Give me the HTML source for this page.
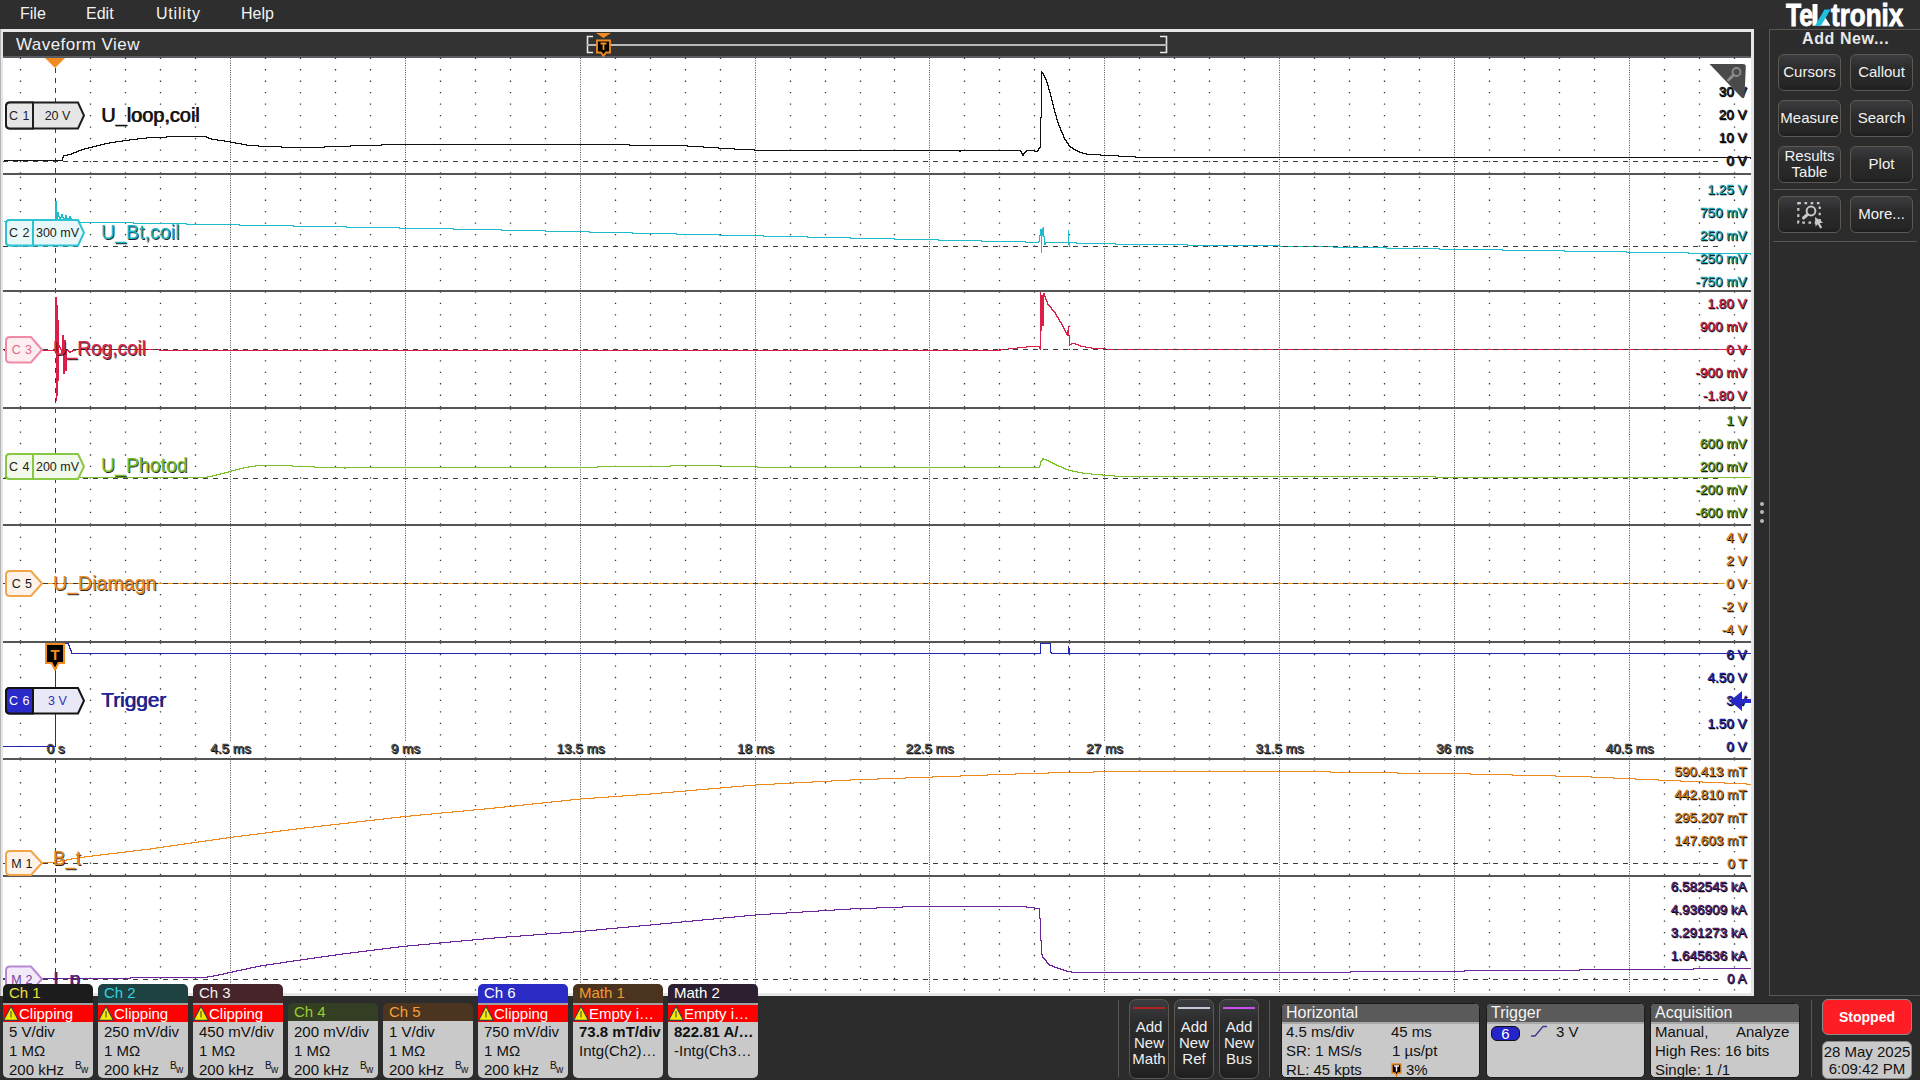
<!DOCTYPE html>
<html><head><meta charset="utf-8"><title>Waveform View</title>
<style>
*{box-sizing:border-box;margin:0;padding:0}
html,body{width:1920px;height:1080px;overflow:hidden;background:#2c2c2c;font-family:"Liberation Sans", sans-serif;}
.a{position:absolute;white-space:pre}
.menu{position:absolute;left:0;top:0;width:1920px;height:29px;background:#2e2e2e}
.menu span{position:absolute;top:4px;color:#f4f4f4;font-size:16px;line-height:20px}
.btn{position:absolute;width:63px;height:37px;border:1px solid #5e5852;border-radius:6px;
 background:linear-gradient(#3c3d40 0%,#2b2b2c 40%,#262626 85%,#1e1e1e 100%);color:#f2f2f2;font-size:15px;
 display:flex;align-items:center;justify-content:center;text-align:center;line-height:16px;padding-bottom:2px}
.badge{position:absolute;width:90px}
.bh{position:absolute;left:0;width:90px;height:19px;border-radius:5px 5px 0 0;font-size:15px;line-height:17px;padding-left:6px}
.bl{position:absolute;left:0;width:90px;height:2px;background:#a0a0a0}
.br{position:absolute;left:0;width:90px;height:17px;background:#ff0000;color:#fff;font-size:15px;line-height:17px;padding-left:16px}
.bb{position:absolute;left:0;width:90px;background:#c9c9c9;border-radius:0 0 5px 5px;color:#111;font-size:15px}
.bb div{position:absolute;left:6px;line-height:19px}
.bw{position:absolute;left:74px;font-size:10px;line-height:10px;color:#111}
.pan{position:absolute;border:1px solid #1a1a1a;border-radius:5px;background:#c9c9c9;overflow:hidden}
.pan .ph{position:absolute;left:0;top:0;right:0;height:18px;background:#5a5a5a;color:#f4f4f4;font-size:16px;line-height:17px;padding-left:4px}
.pan .pl{position:absolute;left:0;right:0;top:18px;height:2px;background:#a8a8a8}
.pan .t{position:absolute;font-size:15px;line-height:19px;color:#111}
</style></head><body>

<div class="menu"><span style="left:20px">File</span><span style="left:86px">Edit</span><span style="left:156px;letter-spacing:0.8px">Utility</span><span style="left:241px">Help</span></div>
<div class="a" style="left:0;top:29px;width:1754px;height:967px;background:#e4e6e8"></div>
<div class="a" style="left:0;top:29px;width:1px;height:967px;background:#b4b4b4"></div>
<div class="a" style="left:3px;top:32px;width:1748px;height:24px;background:#333333"></div>
<div class="a" style="left:3px;top:56px;width:1748px;height:2px;background:#5a5e63"></div>
<div class="a" style="left:3px;top:58px;width:1748px;height:935px;background:#ffffff"></div>
<div class="a" style="left:16px;top:35px;color:#f0f0f0;font-size:17px;line-height:20px;letter-spacing:0.45px">Waveform View</div>
<svg class="a" style="left:0;top:0" width="1760" height="1000" viewBox="0 0 1760 1000"><path d="M593 36.5H587.5V52.5H593" fill="none" stroke="#e8e8e8" stroke-width="1.6"/><path d="M1160 36.5H1166.5V52.5H1160" fill="none" stroke="#e8e8e8" stroke-width="1.6"/><rect x="587" y="44" width="580" height="2" fill="#b8b8b8"/><path d="M596 33H611L603.5 38Z" fill="#f28c22"/><path d="M597 40.5H610V52.5H606L603.5 56L601 52.5H597Z" fill="#000" stroke="#f28c22" stroke-width="1.8"/><path d="M600.5 43.5H606.5M603.5 43.5V50" stroke="#f28c22" stroke-width="1.8"/><path d="M20.5 57.65V173.65M90.5 57.65V173.65M125.5 57.65V173.65M160.5 57.65V173.65M195.5 57.65V173.65M265.5 57.65V173.65M300.5 57.65V173.65M335.5 57.65V173.65M370.5 57.65V173.65M440.5 57.65V173.65M475.5 57.65V173.65M510.5 57.65V173.65M545.5 57.65V173.65M615.5 57.65V173.65M650.5 57.65V173.65M685.5 57.65V173.65M720.5 57.65V173.65M790.5 57.65V173.65M825.5 57.65V173.65M860.5 57.65V173.65M894.5 57.65V173.65M964.5 57.65V173.65M999.5 57.65V173.65M1034.5 57.65V173.65M1069.5 57.65V173.65M1139.5 57.65V173.65M1174.5 57.65V173.65M1209.5 57.65V173.65M1244.5 57.65V173.65M1314.5 57.65V173.65M1349.5 57.65V173.65M1384.5 57.65V173.65M1419.5 57.65V173.65M1489.5 57.65V173.65M1524.5 57.65V173.65M1559.5 57.65V173.65M1594.5 57.65V173.65M1664.5 57.65V173.65M1699.5 57.65V173.65M1734.5 57.65V173.65M20.5 176.65V292.65M90.5 176.65V292.65M125.5 176.65V292.65M160.5 176.65V292.65M195.5 176.65V292.65M265.5 176.65V292.65M300.5 176.65V292.65M335.5 176.65V292.65M370.5 176.65V292.65M440.5 176.65V292.65M475.5 176.65V292.65M510.5 176.65V292.65M545.5 176.65V292.65M615.5 176.65V292.65M650.5 176.65V292.65M685.5 176.65V292.65M720.5 176.65V292.65M790.5 176.65V292.65M825.5 176.65V292.65M860.5 176.65V292.65M894.5 176.65V292.65M964.5 176.65V292.65M999.5 176.65V292.65M1034.5 176.65V292.65M1069.5 176.65V292.65M1139.5 176.65V292.65M1174.5 176.65V292.65M1209.5 176.65V292.65M1244.5 176.65V292.65M1314.5 176.65V292.65M1349.5 176.65V292.65M1384.5 176.65V292.65M1419.5 176.65V292.65M1489.5 176.65V292.65M1524.5 176.65V292.65M1559.5 176.65V292.65M1594.5 176.65V292.65M1664.5 176.65V292.65M1699.5 176.65V292.65M1734.5 176.65V292.65M20.5 291.35V407.35M90.5 291.35V407.35M125.5 291.35V407.35M160.5 291.35V407.35M195.5 291.35V407.35M265.5 291.35V407.35M300.5 291.35V407.35M335.5 291.35V407.35M370.5 291.35V407.35M440.5 291.35V407.35M475.5 291.35V407.35M510.5 291.35V407.35M545.5 291.35V407.35M615.5 291.35V407.35M650.5 291.35V407.35M685.5 291.35V407.35M720.5 291.35V407.35M790.5 291.35V407.35M825.5 291.35V407.35M860.5 291.35V407.35M894.5 291.35V407.35M964.5 291.35V407.35M999.5 291.35V407.35M1034.5 291.35V407.35M1069.5 291.35V407.35M1139.5 291.35V407.35M1174.5 291.35V407.35M1209.5 291.35V407.35M1244.5 291.35V407.35M1314.5 291.35V407.35M1349.5 291.35V407.35M1384.5 291.35V407.35M1419.5 291.35V407.35M1489.5 291.35V407.35M1524.5 291.35V407.35M1559.5 291.35V407.35M1594.5 291.35V407.35M1664.5 291.35V407.35M1699.5 291.35V407.35M1734.5 291.35V407.35M20.5 408.45V524.45M90.5 408.45V524.45M125.5 408.45V524.45M160.5 408.45V524.45M195.5 408.45V524.45M265.5 408.45V524.45M300.5 408.45V524.45M335.5 408.45V524.45M370.5 408.45V524.45M440.5 408.45V524.45M475.5 408.45V524.45M510.5 408.45V524.45M545.5 408.45V524.45M615.5 408.45V524.45M650.5 408.45V524.45M685.5 408.45V524.45M720.5 408.45V524.45M790.5 408.45V524.45M825.5 408.45V524.45M860.5 408.45V524.45M894.5 408.45V524.45M964.5 408.45V524.45M999.5 408.45V524.45M1034.5 408.45V524.45M1069.5 408.45V524.45M1139.5 408.45V524.45M1174.5 408.45V524.45M1209.5 408.45V524.45M1244.5 408.45V524.45M1314.5 408.45V524.45M1349.5 408.45V524.45M1384.5 408.45V524.45M1419.5 408.45V524.45M1489.5 408.45V524.45M1524.5 408.45V524.45M1559.5 408.45V524.45M1594.5 408.45V524.45M1664.5 408.45V524.45M1699.5 408.45V524.45M1734.5 408.45V524.45M20.5 525.25V641.25M90.5 525.25V641.25M125.5 525.25V641.25M160.5 525.25V641.25M195.5 525.25V641.25M265.5 525.25V641.25M300.5 525.25V641.25M335.5 525.25V641.25M370.5 525.25V641.25M440.5 525.25V641.25M475.5 525.25V641.25M510.5 525.25V641.25M545.5 525.25V641.25M615.5 525.25V641.25M650.5 525.25V641.25M685.5 525.25V641.25M720.5 525.25V641.25M790.5 525.25V641.25M825.5 525.25V641.25M860.5 525.25V641.25M894.5 525.25V641.25M964.5 525.25V641.25M999.5 525.25V641.25M1034.5 525.25V641.25M1069.5 525.25V641.25M1139.5 525.25V641.25M1174.5 525.25V641.25M1209.5 525.25V641.25M1244.5 525.25V641.25M1314.5 525.25V641.25M1349.5 525.25V641.25M1384.5 525.25V641.25M1419.5 525.25V641.25M1489.5 525.25V641.25M1524.5 525.25V641.25M1559.5 525.25V641.25M1594.5 525.25V641.25M1664.5 525.25V641.25M1699.5 525.25V641.25M1734.5 525.25V641.25M20.5 642.45V758.45M90.5 642.45V758.45M125.5 642.45V758.45M160.5 642.45V758.45M195.5 642.45V758.45M265.5 642.45V758.45M300.5 642.45V758.45M335.5 642.45V758.45M370.5 642.45V758.45M440.5 642.45V758.45M475.5 642.45V758.45M510.5 642.45V758.45M545.5 642.45V758.45M615.5 642.45V758.45M650.5 642.45V758.45M685.5 642.45V758.45M720.5 642.45V758.45M790.5 642.45V758.45M825.5 642.45V758.45M860.5 642.45V758.45M894.5 642.45V758.45M964.5 642.45V758.45M999.5 642.45V758.45M1034.5 642.45V758.45M1069.5 642.45V758.45M1139.5 642.45V758.45M1174.5 642.45V758.45M1209.5 642.45V758.45M1244.5 642.45V758.45M1314.5 642.45V758.45M1349.5 642.45V758.45M1384.5 642.45V758.45M1419.5 642.45V758.45M1489.5 642.45V758.45M1524.5 642.45V758.45M1559.5 642.45V758.45M1594.5 642.45V758.45M1664.5 642.45V758.45M1699.5 642.45V758.45M1734.5 642.45V758.45M20.5 759.15V875.15M90.5 759.15V875.15M125.5 759.15V875.15M160.5 759.15V875.15M195.5 759.15V875.15M265.5 759.15V875.15M300.5 759.15V875.15M335.5 759.15V875.15M370.5 759.15V875.15M440.5 759.15V875.15M475.5 759.15V875.15M510.5 759.15V875.15M545.5 759.15V875.15M615.5 759.15V875.15M650.5 759.15V875.15M685.5 759.15V875.15M720.5 759.15V875.15M790.5 759.15V875.15M825.5 759.15V875.15M860.5 759.15V875.15M894.5 759.15V875.15M964.5 759.15V875.15M999.5 759.15V875.15M1034.5 759.15V875.15M1069.5 759.15V875.15M1139.5 759.15V875.15M1174.5 759.15V875.15M1209.5 759.15V875.15M1244.5 759.15V875.15M1314.5 759.15V875.15M1349.5 759.15V875.15M1384.5 759.15V875.15M1419.5 759.15V875.15M1489.5 759.15V875.15M1524.5 759.15V875.15M1559.5 759.15V875.15M1594.5 759.15V875.15M1664.5 759.15V875.15M1699.5 759.15V875.15M1734.5 759.15V875.15M20.5 874.55V990.55M90.5 874.55V990.55M125.5 874.55V990.55M160.5 874.55V990.55M195.5 874.55V990.55M265.5 874.55V990.55M300.5 874.55V990.55M335.5 874.55V990.55M370.5 874.55V990.55M440.5 874.55V990.55M475.5 874.55V990.55M510.5 874.55V990.55M545.5 874.55V990.55M615.5 874.55V990.55M650.5 874.55V990.55M685.5 874.55V990.55M720.5 874.55V990.55M790.5 874.55V990.55M825.5 874.55V990.55M860.5 874.55V990.55M894.5 874.55V990.55M964.5 874.55V990.55M999.5 874.55V990.55M1034.5 874.55V990.55M1069.5 874.55V990.55M1139.5 874.55V990.55M1174.5 874.55V990.55M1209.5 874.55V990.55M1244.5 874.55V990.55M1314.5 874.55V990.55M1349.5 874.55V990.55M1384.5 874.55V990.55M1419.5 874.55V990.55M1489.5 874.55V990.55M1524.5 874.55V990.55M1559.5 874.55V990.55M1594.5 874.55V990.55M1664.5 874.55V990.55M1699.5 874.55V990.55M1734.5 874.55V990.55" stroke="#383838" stroke-width="1.3" stroke-dasharray="1.3 10.17" fill="none"/><path d="M230.5 58V993M405.5 58V993M580.5 58V993M755.5 58V993M929.5 58V993M1104.5 58V993M1279.5 58V993M1454.5 58V993M1629.5 58V993" stroke="#4a4a4a" stroke-width="1" stroke-dasharray="1 1.35" fill="none"/><path d="M55.5 68V993" stroke="#3c3c3c" stroke-width="1" stroke-dasharray="5 5" fill="none"/><path d="M3 174H1751M3 291H1751M3 408H1751M3 525H1751M3 642H1751M3 759H1751M3 876H1751" stroke="#555" stroke-width="2" fill="none" shape-rendering="crispEdges"/><path d="M3 583.5H1751" fill="none" stroke="#f0921e" stroke-width="1.6" shape-rendering="crispEdges" /><rect x="1717.2" y="84.9" width="30.8" height="14" fill="#fff"/><text x="1747.4" y="96.80000000000001" text-anchor="end" font-family="Liberation Sans" font-size="13.5" fill="#000" stroke="#000" stroke-width="0.3">30 V</text><text x="1746.5" y="95.9" text-anchor="end" font-family="Liberation Sans" font-size="13.5" fill="#111111" stroke="#111111" stroke-width="0.3">30 V</text><rect x="1717.2" y="108.4" width="30.8" height="14" fill="#fff"/><text x="1747.4" y="120.30000000000001" text-anchor="end" font-family="Liberation Sans" font-size="13.5" fill="#000" stroke="#000" stroke-width="0.3">20 V</text><text x="1746.5" y="119.4" text-anchor="end" font-family="Liberation Sans" font-size="13.5" fill="#111111" stroke="#111111" stroke-width="0.3">20 V</text><rect x="1717.2" y="131.4" width="30.8" height="14" fill="#fff"/><text x="1747.4" y="143.3" text-anchor="end" font-family="Liberation Sans" font-size="13.5" fill="#000" stroke="#000" stroke-width="0.3">10 V</text><text x="1746.5" y="142.4" text-anchor="end" font-family="Liberation Sans" font-size="13.5" fill="#111111" stroke="#111111" stroke-width="0.3">10 V</text><rect x="1724.7" y="154.4" width="23.3" height="14" fill="#fff"/><text x="1747.4" y="166.3" text-anchor="end" font-family="Liberation Sans" font-size="13.5" fill="#000" stroke="#000" stroke-width="0.3">0 V</text><text x="1746.5" y="165.4" text-anchor="end" font-family="Liberation Sans" font-size="13.5" fill="#111111" stroke="#111111" stroke-width="0.3">0 V</text><rect x="1706.0" y="182.9" width="42.0" height="14" fill="#fff"/><text x="1747.4" y="194.8" text-anchor="end" font-family="Liberation Sans" font-size="13.5" fill="#000" stroke="#000" stroke-width="0.3">1.25 V</text><text x="1746.5" y="193.9" text-anchor="end" font-family="Liberation Sans" font-size="13.5" fill="#14a4b4" stroke="#14a4b4" stroke-width="0.3">1.25 V</text><rect x="1698.5" y="205.9" width="49.5" height="14" fill="#fff"/><text x="1747.4" y="217.8" text-anchor="end" font-family="Liberation Sans" font-size="13.5" fill="#000" stroke="#000" stroke-width="0.3">750 mV</text><text x="1746.5" y="216.9" text-anchor="end" font-family="Liberation Sans" font-size="13.5" fill="#14a4b4" stroke="#14a4b4" stroke-width="0.3">750 mV</text><rect x="1698.5" y="228.9" width="49.5" height="14" fill="#fff"/><text x="1747.4" y="240.8" text-anchor="end" font-family="Liberation Sans" font-size="13.5" fill="#000" stroke="#000" stroke-width="0.3">250 mV</text><text x="1746.5" y="239.9" text-anchor="end" font-family="Liberation Sans" font-size="13.5" fill="#14a4b4" stroke="#14a4b4" stroke-width="0.3">250 mV</text><rect x="1694.0" y="251.9" width="54.0" height="14" fill="#fff"/><text x="1747.4" y="263.79999999999995" text-anchor="end" font-family="Liberation Sans" font-size="13.5" fill="#000" stroke="#000" stroke-width="0.3">-250 mV</text><text x="1746.5" y="262.9" text-anchor="end" font-family="Liberation Sans" font-size="13.5" fill="#14a4b4" stroke="#14a4b4" stroke-width="0.3">-250 mV</text><rect x="1694.0" y="274.9" width="54.0" height="14" fill="#fff"/><text x="1747.4" y="286.79999999999995" text-anchor="end" font-family="Liberation Sans" font-size="13.5" fill="#000" stroke="#000" stroke-width="0.3">-750 mV</text><text x="1746.5" y="285.9" text-anchor="end" font-family="Liberation Sans" font-size="13.5" fill="#14a4b4" stroke="#14a4b4" stroke-width="0.3">-750 mV</text><rect x="1706.0" y="296.9" width="42.0" height="14" fill="#fff"/><text x="1747.4" y="308.79999999999995" text-anchor="end" font-family="Liberation Sans" font-size="13.5" fill="#000" stroke="#000" stroke-width="0.3">1.80 V</text><text x="1746.5" y="307.9" text-anchor="end" font-family="Liberation Sans" font-size="13.5" fill="#c01e46" stroke="#c01e46" stroke-width="0.3">1.80 V</text><rect x="1698.5" y="319.9" width="49.5" height="14" fill="#fff"/><text x="1747.4" y="331.79999999999995" text-anchor="end" font-family="Liberation Sans" font-size="13.5" fill="#000" stroke="#000" stroke-width="0.3">900 mV</text><text x="1746.5" y="330.9" text-anchor="end" font-family="Liberation Sans" font-size="13.5" fill="#c01e46" stroke="#c01e46" stroke-width="0.3">900 mV</text><rect x="1724.7" y="342.9" width="23.3" height="14" fill="#fff"/><text x="1747.4" y="354.79999999999995" text-anchor="end" font-family="Liberation Sans" font-size="13.5" fill="#000" stroke="#000" stroke-width="0.3">0 V</text><text x="1746.5" y="353.9" text-anchor="end" font-family="Liberation Sans" font-size="13.5" fill="#c01e46" stroke="#c01e46" stroke-width="0.3">0 V</text><rect x="1694.0" y="365.9" width="54.0" height="14" fill="#fff"/><text x="1747.4" y="377.79999999999995" text-anchor="end" font-family="Liberation Sans" font-size="13.5" fill="#000" stroke="#000" stroke-width="0.3">-900 mV</text><text x="1746.5" y="376.9" text-anchor="end" font-family="Liberation Sans" font-size="13.5" fill="#c01e46" stroke="#c01e46" stroke-width="0.3">-900 mV</text><rect x="1701.5" y="388.9" width="46.5" height="14" fill="#fff"/><text x="1747.4" y="400.79999999999995" text-anchor="end" font-family="Liberation Sans" font-size="13.5" fill="#000" stroke="#000" stroke-width="0.3">-1.80 V</text><text x="1746.5" y="399.9" text-anchor="end" font-family="Liberation Sans" font-size="13.5" fill="#c01e46" stroke="#c01e46" stroke-width="0.3">-1.80 V</text><rect x="1724.7" y="413.9" width="23.3" height="14" fill="#fff"/><text x="1747.4" y="425.79999999999995" text-anchor="end" font-family="Liberation Sans" font-size="13.5" fill="#000" stroke="#000" stroke-width="0.3">1 V</text><text x="1746.5" y="424.9" text-anchor="end" font-family="Liberation Sans" font-size="13.5" fill="#5e9420" stroke="#5e9420" stroke-width="0.3">1 V</text><rect x="1698.5" y="436.9" width="49.5" height="14" fill="#fff"/><text x="1747.4" y="448.79999999999995" text-anchor="end" font-family="Liberation Sans" font-size="13.5" fill="#000" stroke="#000" stroke-width="0.3">600 mV</text><text x="1746.5" y="447.9" text-anchor="end" font-family="Liberation Sans" font-size="13.5" fill="#5e9420" stroke="#5e9420" stroke-width="0.3">600 mV</text><rect x="1698.5" y="459.9" width="49.5" height="14" fill="#fff"/><text x="1747.4" y="471.79999999999995" text-anchor="end" font-family="Liberation Sans" font-size="13.5" fill="#000" stroke="#000" stroke-width="0.3">200 mV</text><text x="1746.5" y="470.9" text-anchor="end" font-family="Liberation Sans" font-size="13.5" fill="#5e9420" stroke="#5e9420" stroke-width="0.3">200 mV</text><rect x="1694.0" y="482.9" width="54.0" height="14" fill="#fff"/><text x="1747.4" y="494.79999999999995" text-anchor="end" font-family="Liberation Sans" font-size="13.5" fill="#000" stroke="#000" stroke-width="0.3">-200 mV</text><text x="1746.5" y="493.9" text-anchor="end" font-family="Liberation Sans" font-size="13.5" fill="#5e9420" stroke="#5e9420" stroke-width="0.3">-200 mV</text><rect x="1694.0" y="505.9" width="54.0" height="14" fill="#fff"/><text x="1747.4" y="517.8" text-anchor="end" font-family="Liberation Sans" font-size="13.5" fill="#000" stroke="#000" stroke-width="0.3">-600 mV</text><text x="1746.5" y="516.9" text-anchor="end" font-family="Liberation Sans" font-size="13.5" fill="#5e9420" stroke="#5e9420" stroke-width="0.3">-600 mV</text><rect x="1724.7" y="530.9" width="23.3" height="14" fill="#fff"/><text x="1747.4" y="542.8" text-anchor="end" font-family="Liberation Sans" font-size="13.5" fill="#000" stroke="#000" stroke-width="0.3">4 V</text><text x="1746.5" y="541.9" text-anchor="end" font-family="Liberation Sans" font-size="13.5" fill="#d87e1e" stroke="#d87e1e" stroke-width="0.3">4 V</text><rect x="1724.7" y="553.9" width="23.3" height="14" fill="#fff"/><text x="1747.4" y="565.8" text-anchor="end" font-family="Liberation Sans" font-size="13.5" fill="#000" stroke="#000" stroke-width="0.3">2 V</text><text x="1746.5" y="564.9" text-anchor="end" font-family="Liberation Sans" font-size="13.5" fill="#d87e1e" stroke="#d87e1e" stroke-width="0.3">2 V</text><rect x="1724.7" y="576.9" width="23.3" height="14" fill="#fff"/><text x="1747.4" y="588.8" text-anchor="end" font-family="Liberation Sans" font-size="13.5" fill="#000" stroke="#000" stroke-width="0.3">0 V</text><text x="1746.5" y="587.9" text-anchor="end" font-family="Liberation Sans" font-size="13.5" fill="#d87e1e" stroke="#d87e1e" stroke-width="0.3">0 V</text><rect x="1720.2" y="599.9" width="27.8" height="14" fill="#fff"/><text x="1747.4" y="611.8" text-anchor="end" font-family="Liberation Sans" font-size="13.5" fill="#000" stroke="#000" stroke-width="0.3">-2 V</text><text x="1746.5" y="610.9" text-anchor="end" font-family="Liberation Sans" font-size="13.5" fill="#d87e1e" stroke="#d87e1e" stroke-width="0.3">-2 V</text><rect x="1720.2" y="622.9" width="27.8" height="14" fill="#fff"/><text x="1747.4" y="634.8" text-anchor="end" font-family="Liberation Sans" font-size="13.5" fill="#000" stroke="#000" stroke-width="0.3">-4 V</text><text x="1746.5" y="633.9" text-anchor="end" font-family="Liberation Sans" font-size="13.5" fill="#d87e1e" stroke="#d87e1e" stroke-width="0.3">-4 V</text><rect x="1724.7" y="647.9" width="23.3" height="14" fill="#fff"/><text x="1747.4" y="659.8" text-anchor="end" font-family="Liberation Sans" font-size="13.5" fill="#000" stroke="#000" stroke-width="0.3">6 V</text><text x="1746.5" y="658.9" text-anchor="end" font-family="Liberation Sans" font-size="13.5" fill="#20209c" stroke="#20209c" stroke-width="0.3">6 V</text><rect x="1706.0" y="670.9" width="42.0" height="14" fill="#fff"/><text x="1747.4" y="682.8" text-anchor="end" font-family="Liberation Sans" font-size="13.5" fill="#000" stroke="#000" stroke-width="0.3">4.50 V</text><text x="1746.5" y="681.9" text-anchor="end" font-family="Liberation Sans" font-size="13.5" fill="#20209c" stroke="#20209c" stroke-width="0.3">4.50 V</text><rect x="1724.7" y="693.9" width="23.3" height="14" fill="#fff"/><text x="1747.4" y="705.8" text-anchor="end" font-family="Liberation Sans" font-size="13.5" fill="#000" stroke="#000" stroke-width="0.3">3 V</text><text x="1746.5" y="704.9" text-anchor="end" font-family="Liberation Sans" font-size="13.5" fill="#20209c" stroke="#20209c" stroke-width="0.3">3 V</text><rect x="1706.0" y="716.9" width="42.0" height="14" fill="#fff"/><text x="1747.4" y="728.8" text-anchor="end" font-family="Liberation Sans" font-size="13.5" fill="#000" stroke="#000" stroke-width="0.3">1.50 V</text><text x="1746.5" y="727.9" text-anchor="end" font-family="Liberation Sans" font-size="13.5" fill="#20209c" stroke="#20209c" stroke-width="0.3">1.50 V</text><rect x="1724.7" y="739.9" width="23.3" height="14" fill="#fff"/><text x="1747.4" y="751.8" text-anchor="end" font-family="Liberation Sans" font-size="13.5" fill="#000" stroke="#000" stroke-width="0.3">0 V</text><text x="1746.5" y="750.9" text-anchor="end" font-family="Liberation Sans" font-size="13.5" fill="#20209c" stroke="#20209c" stroke-width="0.3">0 V</text><rect x="1673.0" y="765.4" width="75.0" height="14" fill="#fff"/><text x="1747.4" y="777.3" text-anchor="end" font-family="Liberation Sans" font-size="13.5" fill="#000" stroke="#000" stroke-width="0.3">590.413 mT</text><text x="1746.5" y="776.4" text-anchor="end" font-family="Liberation Sans" font-size="13.5" fill="#c87418" stroke="#c87418" stroke-width="0.3">590.413 mT</text><rect x="1673.0" y="788.4" width="75.0" height="14" fill="#fff"/><text x="1747.4" y="800.3" text-anchor="end" font-family="Liberation Sans" font-size="13.5" fill="#000" stroke="#000" stroke-width="0.3">442.810 mT</text><text x="1746.5" y="799.4" text-anchor="end" font-family="Liberation Sans" font-size="13.5" fill="#c87418" stroke="#c87418" stroke-width="0.3">442.810 mT</text><rect x="1673.0" y="811.4" width="75.0" height="14" fill="#fff"/><text x="1747.4" y="823.3" text-anchor="end" font-family="Liberation Sans" font-size="13.5" fill="#000" stroke="#000" stroke-width="0.3">295.207 mT</text><text x="1746.5" y="822.4" text-anchor="end" font-family="Liberation Sans" font-size="13.5" fill="#c87418" stroke="#c87418" stroke-width="0.3">295.207 mT</text><rect x="1673.0" y="834.4" width="75.0" height="14" fill="#fff"/><text x="1747.4" y="846.3" text-anchor="end" font-family="Liberation Sans" font-size="13.5" fill="#000" stroke="#000" stroke-width="0.3">147.603 mT</text><text x="1746.5" y="845.4" text-anchor="end" font-family="Liberation Sans" font-size="13.5" fill="#c87418" stroke="#c87418" stroke-width="0.3">147.603 mT</text><rect x="1725.7" y="857.4" width="22.3" height="14" fill="#fff"/><text x="1747.4" y="869.3" text-anchor="end" font-family="Liberation Sans" font-size="13.5" fill="#000" stroke="#000" stroke-width="0.3">0 T</text><text x="1746.5" y="868.4" text-anchor="end" font-family="Liberation Sans" font-size="13.5" fill="#c87418" stroke="#c87418" stroke-width="0.3">0 T</text><rect x="1669.2" y="879.9" width="78.8" height="14" fill="#fff"/><text x="1747.4" y="891.8" text-anchor="end" font-family="Liberation Sans" font-size="13.5" fill="#000" stroke="#000" stroke-width="0.3">6.582545 kA</text><text x="1746.5" y="890.9" text-anchor="end" font-family="Liberation Sans" font-size="13.5" fill="#4c1a6c" stroke="#4c1a6c" stroke-width="0.3">6.582545 kA</text><rect x="1669.2" y="902.9" width="78.8" height="14" fill="#fff"/><text x="1747.4" y="914.8" text-anchor="end" font-family="Liberation Sans" font-size="13.5" fill="#000" stroke="#000" stroke-width="0.3">4.936909 kA</text><text x="1746.5" y="913.9" text-anchor="end" font-family="Liberation Sans" font-size="13.5" fill="#4c1a6c" stroke="#4c1a6c" stroke-width="0.3">4.936909 kA</text><rect x="1669.2" y="925.9" width="78.8" height="14" fill="#fff"/><text x="1747.4" y="937.8" text-anchor="end" font-family="Liberation Sans" font-size="13.5" fill="#000" stroke="#000" stroke-width="0.3">3.291273 kA</text><text x="1746.5" y="936.9" text-anchor="end" font-family="Liberation Sans" font-size="13.5" fill="#4c1a6c" stroke="#4c1a6c" stroke-width="0.3">3.291273 kA</text><rect x="1669.2" y="948.9" width="78.8" height="14" fill="#fff"/><text x="1747.4" y="960.8" text-anchor="end" font-family="Liberation Sans" font-size="13.5" fill="#000" stroke="#000" stroke-width="0.3">1.645636 kA</text><text x="1746.5" y="959.9" text-anchor="end" font-family="Liberation Sans" font-size="13.5" fill="#4c1a6c" stroke="#4c1a6c" stroke-width="0.3">1.645636 kA</text><rect x="1725.5" y="971.9" width="22.5" height="14" fill="#fff"/><text x="1747.4" y="983.8" text-anchor="end" font-family="Liberation Sans" font-size="13.5" fill="#000" stroke="#000" stroke-width="0.3">0 A</text><text x="1746.5" y="982.9" text-anchor="end" font-family="Liberation Sans" font-size="13.5" fill="#4c1a6c" stroke="#4c1a6c" stroke-width="0.3">0 A</text><rect x="45.0" y="741.8" width="21.0" height="14" fill="#fff"/><text x="56.4" y="753.6999999999999" text-anchor="middle" font-family="Liberation Sans" font-size="13.5" fill="#000" stroke="#000" stroke-width="0.3">0 s</text><text x="55.5" y="752.8" text-anchor="middle" font-family="Liberation Sans" font-size="13.5" fill="#4a4a4a" stroke="#4a4a4a" stroke-width="0.3">0 s</text><rect x="208.7" y="741.8" width="43.5" height="14" fill="#fff"/><text x="231.4" y="753.6999999999999" text-anchor="middle" font-family="Liberation Sans" font-size="13.5" fill="#000" stroke="#000" stroke-width="0.3">4.5 ms</text><text x="230.5" y="752.8" text-anchor="middle" font-family="Liberation Sans" font-size="13.5" fill="#4a4a4a" stroke="#4a4a4a" stroke-width="0.3">4.5 ms</text><rect x="389.4" y="741.8" width="32.3" height="14" fill="#fff"/><text x="406.4" y="753.6999999999999" text-anchor="middle" font-family="Liberation Sans" font-size="13.5" fill="#000" stroke="#000" stroke-width="0.3">9 ms</text><text x="405.5" y="752.8" text-anchor="middle" font-family="Liberation Sans" font-size="13.5" fill="#4a4a4a" stroke="#4a4a4a" stroke-width="0.3">9 ms</text><rect x="555.0" y="741.8" width="51.0" height="14" fill="#fff"/><text x="581.4" y="753.6999999999999" text-anchor="middle" font-family="Liberation Sans" font-size="13.5" fill="#000" stroke="#000" stroke-width="0.3">13.5 ms</text><text x="580.5" y="752.8" text-anchor="middle" font-family="Liberation Sans" font-size="13.5" fill="#4a4a4a" stroke="#4a4a4a" stroke-width="0.3">13.5 ms</text><rect x="735.6" y="741.8" width="39.8" height="14" fill="#fff"/><text x="756.4" y="753.6999999999999" text-anchor="middle" font-family="Liberation Sans" font-size="13.5" fill="#000" stroke="#000" stroke-width="0.3">18 ms</text><text x="755.5" y="752.8" text-anchor="middle" font-family="Liberation Sans" font-size="13.5" fill="#4a4a4a" stroke="#4a4a4a" stroke-width="0.3">18 ms</text><rect x="904.0" y="741.8" width="51.0" height="14" fill="#fff"/><text x="930.4" y="753.6999999999999" text-anchor="middle" font-family="Liberation Sans" font-size="13.5" fill="#000" stroke="#000" stroke-width="0.3">22.5 ms</text><text x="929.5" y="752.8" text-anchor="middle" font-family="Liberation Sans" font-size="13.5" fill="#4a4a4a" stroke="#4a4a4a" stroke-width="0.3">22.5 ms</text><rect x="1084.6" y="741.8" width="39.8" height="14" fill="#fff"/><text x="1105.4" y="753.6999999999999" text-anchor="middle" font-family="Liberation Sans" font-size="13.5" fill="#000" stroke="#000" stroke-width="0.3">27 ms</text><text x="1104.5" y="752.8" text-anchor="middle" font-family="Liberation Sans" font-size="13.5" fill="#4a4a4a" stroke="#4a4a4a" stroke-width="0.3">27 ms</text><rect x="1254.0" y="741.8" width="51.0" height="14" fill="#fff"/><text x="1280.4" y="753.6999999999999" text-anchor="middle" font-family="Liberation Sans" font-size="13.5" fill="#000" stroke="#000" stroke-width="0.3">31.5 ms</text><text x="1279.5" y="752.8" text-anchor="middle" font-family="Liberation Sans" font-size="13.5" fill="#4a4a4a" stroke="#4a4a4a" stroke-width="0.3">31.5 ms</text><rect x="1434.6" y="741.8" width="39.8" height="14" fill="#fff"/><text x="1455.4" y="753.6999999999999" text-anchor="middle" font-family="Liberation Sans" font-size="13.5" fill="#000" stroke="#000" stroke-width="0.3">36 ms</text><text x="1454.5" y="752.8" text-anchor="middle" font-family="Liberation Sans" font-size="13.5" fill="#4a4a4a" stroke="#4a4a4a" stroke-width="0.3">36 ms</text><rect x="1604.0" y="741.8" width="51.0" height="14" fill="#fff"/><text x="1630.4" y="753.6999999999999" text-anchor="middle" font-family="Liberation Sans" font-size="13.5" fill="#000" stroke="#000" stroke-width="0.3">40.5 ms</text><text x="1629.5" y="752.8" text-anchor="middle" font-family="Liberation Sans" font-size="13.5" fill="#4a4a4a" stroke="#4a4a4a" stroke-width="0.3">40.5 ms</text><path d="M4 160.5H62M62.5 157V161M63.5 155V158M64 155.5H67M67.5 154V156M68 154.5H71M71.5 153V155M72 153.5H73M73.5 152V154M74 152.5H76M76.5 151V153M77 151.5H78M78.5 150V152M79 150.5H81M81.5 149V151M82 149.5H84M84.5 148V150M85 148.5H88M88.5 147V149M89 147.5H92M92.5 146V148M93 146.5H96M96.5 145V147M97 145.5H100M100.5 144V146M101 144.5H104M104.5 143V145M105 143.5H109M109.5 142V144M110 142.5H115M115.5 141V143M116 141.5H122M122.5 140V142M123 140.5H129M129.5 139V141M130 139.5H137M137.5 138V140M138 138.5H146M146.5 137V139M147 137.5H166M166.5 136V138M167 136.5H206M206.5 136V138M207 137.5H208M208.5 137V139M209 138.5H211M211.5 138V140M212 139.5H217M217.5 139V141M218 140.5H224M224.5 140V142M225 141.5H230M230.5 141V143M231 142.5H235M235.5 142V144M236 143.5H241M241.5 143V145M242 144.5H246M246.5 144V146M247 145.5H258M258.5 145V147M259 146.5H281M281.5 146V148M282 147.5H324M324.5 146V148M325 146.5H350M350.5 145V147M351 145.5H381M381.5 144V146M382 144.5H629M629.5 144V146M630 145.5H687M687.5 145V147M688 146.5H703M703.5 146V148M704 147.5H718M718.5 147V149M719 148.5H734M734.5 148V150M735 149.5H754M754.5 149V151M755 150.5H959M959.5 150V152M960.5 150V152M961 150.5H1020M1020.5 150V152M1021.5 151V154M1022.5 153V156M1023.5 153V156M1024.5 152V154M1025.5 151V153M1026.5 150V152M1027 150.5H1034M1034.5 150V152M1035 151.5H1037M1037.5 150V152M1038.5 148V151M1039.5 147V149M1040.5 117V148M1041.5 71V118M1042.5 72V74M1043.5 73V76M1044.5 75V78M1045.5 77V80M1046.5 79V83M1047.5 82V86M1048.5 85V90M1049.5 89V93M1050.5 92V97M1051.5 96V101M1052.5 100V105M1053.5 104V109M1054.5 108V113M1055.5 112V116M1056.5 115V120M1057.5 119V123M1058.5 122V126M1059.5 125V128M1060.5 127V131M1061.5 130V133M1062.5 132V135M1063.5 134V138M1064.5 137V140M1065.5 139V141M1066.5 140V143M1067.5 142V144M1068.5 143V146M1069.5 145V147M1070.5 146V148M1071 147.5H1072M1072.5 147V149M1073.5 148V150M1074 149.5H1075M1075.5 149V151M1076 150.5H1077M1077.5 150V152M1078 151.5H1079M1079.5 151V153M1080 152.5H1082M1082.5 152V154M1083 153.5H1086M1086.5 153V155M1087 154.5H1100M1100.5 154V156M1101 155.5H1118M1118.5 155V157M1119 156.5H1135M1135.5 156V158M1136 157.5H1750M1750.5 157V159" fill="none" stroke="#101010" stroke-width="1.2" shape-rendering="crispEdges" /><path d="M4 221.5H55M55.5 201V222M56.5 201V222M57.5 212V222M58.5 212V217M59.5 216V222M60.5 217V222M61.5 214V218M62.5 214V218M63.5 217V222M64.5 218V222M65.5 215V219M66.5 215V219M67.5 218V222M68.5 218V222M69.5 216V219M70.5 216V219M71.5 218V222M72 221.5H79M79.5 221V223M80 222.5H133M133.5 222V224M134 223.5H186M186.5 223V225M187 224.5H239M239.5 224V226M240 225.5H293M293.5 225V227M294 226.5H346M346.5 226V228M347 227.5H399M399.5 227V229M400 228.5H453M453.5 228V230M454 229.5H501M501.5 229V231M502 230.5H545M545.5 230V232M546 231.5H589M589.5 231V233M590 232.5H632M632.5 232V234M633 233.5H676M676.5 233V235M677 234.5H719M719.5 234V236M720 235.5H763M763.5 235V237M764 236.5H807M807.5 236V238M808 237.5H850M850.5 237V239M851 238.5H894M894.5 238V240M895 239.5H938M938.5 239V241M939 240.5H981M981.5 240V242M982 241.5H1025M1025.5 241V243M1026 242.5H1038M1038.5 241V243M1039.5 235V242M1040.5 229V236M1041.5 229V253M1042.5 228V236M1043.5 227V237M1044.5 236V245M1045.5 242V245M1046 242.5H1068M1068.5 230V245M1069.5 242V245M1070 242.5H1076M1076.5 242V244M1077 243.5H1115M1115.5 243V245M1116 244.5H1187M1187.5 244V246M1188 245.5H1279M1279.5 245V247M1280 246.5H1333M1333.5 246V248M1334 247.5H1386M1386.5 247V249M1387 248.5H1439M1439.5 248V250M1440 249.5H1502M1502.5 249V251M1503 250.5H1564M1564.5 250V252M1565 251.5H1626M1626.5 251V253M1627 252.5H1688M1688.5 252V254M1689 253.5H1750M1750.5 253V255" fill="none" stroke="#1cbccc" stroke-width="1.2" shape-rendering="crispEdges" /><path d="M4 350.5H55M55.5 297V351M56.5 297V401M57.5 305V396M58.5 320V381M59.5 345V348M60.5 347V350M61.5 349V353M62.5 335V353M63.5 335V374M64.5 340V374M65.5 340V371M66.5 350V371M67 350.5H68M68.5 350V352M69.5 351V353M70.5 351V353M71 351.5H72M72.5 350V352M73 350.5H75M75.5 349V351M76 349.5H159M159.5 349V351M160 350.5H1000M1000.5 349V351M1001 349.5H1008M1008.5 348V350M1009 348.5H1017M1017.5 347V349M1018 347.5H1026M1026.5 346V348M1027 346.5H1039M1039.5 346V349M1040.5 292V350M1041.5 295V331M1042.5 295V326M1043.5 293V326M1044.5 293V297M1045.5 296V300M1046.5 299V302M1047.5 301V305M1048.5 304V306M1049.5 305V307M1050.5 306V308M1051.5 307V310M1052.5 309V311M1053.5 310V312M1054.5 311V313M1055.5 312V315M1056.5 314V317M1057.5 316V318M1058.5 317V320M1059.5 319V322M1060.5 321V323M1061.5 322V325M1062.5 324V327M1063.5 326V329M1064.5 328V331M1065.5 330V333M1066.5 332V335M1067.5 330V336M1068.5 326V336M1069.5 335V346M1070 344.5H1071M1071.5 343V345M1072 343.5H1075M1075.5 343V345M1076 344.5H1078M1078.5 344V346M1079 345.5H1080M1080.5 345V347M1081 346.5H1085M1085.5 346V348M1086 347.5H1091M1091.5 347V349M1092 348.5H1105M1105.5 348V350M1106 349.5H1751" fill="none" stroke="#dc1e48" stroke-width="1.2" shape-rendering="crispEdges" /><path d="M4 477.5H207M207.5 476V478M208 476.5H212M212.5 475V477M213 475.5H216M216.5 474V476M217 474.5H220M220.5 473V475M221 473.5H224M224.5 472V474M225 472.5H228M228.5 471V473M229 471.5H231M231.5 470V472M232 470.5H235M235.5 469V471M236 469.5H239M239.5 468V470M240 468.5H243M243.5 467V469M244 467.5H248M248.5 466V468M249 466.5H255M255.5 465V467M256 465.5H292M292.5 465V467M293 466.5H314M314.5 466V468M315 467.5H344M344.5 467V469M345.5 467V469M346 467.5H597M597.5 466V468M598 466.5H670M670.5 465V467M671 465.5H721M721.5 465V467M722 466.5H757M757.5 466V468M758 467.5H1039M1039.5 465V468M1040.5 461V466M1041.5 460V462M1042.5 458V461M1043.5 458V460M1044 459.5H1046M1046.5 459V461M1047 460.5H1048M1048.5 460V462M1049 461.5H1050M1050.5 461V463M1051 462.5H1052M1052.5 462V464M1053 463.5H1054M1054.5 463V465M1055 464.5H1056M1056.5 464V466M1057 465.5H1058M1058.5 465V467M1059 466.5H1061M1061.5 466V468M1062 467.5H1063M1063.5 467V469M1064 468.5H1065M1065.5 468V470M1066 469.5H1068M1068.5 469V471M1069 470.5H1072M1072.5 470V472M1073 471.5H1077M1077.5 471V473M1078 472.5H1082M1082.5 472V474M1083 473.5H1091M1091.5 473V475M1092 474.5H1102M1102.5 474V476M1103 475.5H1114M1114.5 475V477M1115 476.5H1435M1435.5 476V478M1436 477.5H1751" fill="none" stroke="#7cc02c" stroke-width="1.2" shape-rendering="crispEdges" /><path d="M3 746.5H55M55.5 668V747M56.5 665V669M57.5 662V666M58.5 660V663M59.5 657V661M60.5 654V658M61.5 651V655M62.5 648V652M63.5 645V649M64.5 643V646M65 643.5H68M68.5 643V646M69.5 645V649M70.5 648V651M71.5 650V654M72 653.5H1040M1040.5 643V654M1041 643.5H1050M1050.5 643V653M1051.5 652V654M1052 653.5H1068M1068.5 646V654M1069.5 648V654M1070 653.5H1751" fill="none" stroke="#2424b4" stroke-width="1.2" shape-rendering="crispEdges" /><path d="M3 863.5H20M20.5 862V864M21 862.5H55M55.5 861V863M56 861.5H60M60.5 860V862M61 860.5H66M66.5 859V861M67 859.5H71M71.5 858V860M72 858.5H77M77.5 857V859M78 857.5H84M84.5 856V858M85 856.5H92M92.5 855V857M93 855.5H100M100.5 854V856M101 854.5H108M108.5 853V855M109 853.5H117M117.5 852V854M118 852.5H125M125.5 851V853M126 851.5H133M133.5 850V852M134 850.5H141M141.5 849V851M142 849.5H150M150.5 848V850M151 848.5H156M156.5 847V849M157 847.5H163M163.5 846V848M164 846.5H170M170.5 845V847M171 845.5H177M177.5 844V846M178 844.5H184M184.5 843V845M185 843.5H191M191.5 842V844M192 842.5H198M198.5 841V843M199 841.5H205M205.5 840V842M206 840.5H212M212.5 839V841M213 839.5H219M219.5 838V840M220 838.5H226M226.5 837V839M227 837.5H233M233.5 836V838M234 836.5H241M241.5 835V837M242 835.5H249M249.5 834V836M250 834.5H257M257.5 833V835M258 833.5H265M265.5 832V834M266 832.5H272M272.5 831V833M273 831.5H280M280.5 830V832M281 830.5H288M288.5 829V831M289 829.5H296M296.5 828V830M297 828.5H304M304.5 827V829M305 827.5H313M313.5 826V828M314 826.5H321M321.5 825V827M322 825.5H330M330.5 824V826M331 824.5H339M339.5 823V825M340 823.5H348M348.5 822V824M349 822.5H356M356.5 821V823M357 821.5H365M365.5 820V822M366 820.5H374M374.5 819V821M375 819.5H383M383.5 818V820M384 818.5H391M391.5 817V819M392 817.5H400M400.5 816V818M401 816.5H410M410.5 815V817M411 815.5H420M420.5 814V816M421 814.5H431M431.5 813V815M432 813.5H441M441.5 812V814M442 812.5H452M452.5 811V813M453 811.5H463M463.5 810V812M464 810.5H473M473.5 809V811M474 809.5H484M484.5 808V810M485 808.5H494M494.5 807V809M495 807.5H504M504.5 806V808M505 806.5H514M514.5 805V807M515 805.5H523M523.5 804V806M524 804.5H532M532.5 803V805M533 803.5H542M542.5 802V804M543 802.5H551M551.5 801V803M552 801.5H561M561.5 800V802M562 800.5H570M570.5 799V801M571 799.5H580M580.5 798V800M581 798.5H594M594.5 797V799M595 797.5H608M608.5 796V798M609 796.5H622M622.5 795V797M623 795.5H636M636.5 794V796M637 794.5H650M650.5 793V795M651 793.5H661M661.5 792V794M662 792.5H673M673.5 791V793M674 791.5H685M685.5 790V792M686 790.5H696M696.5 789V791M697 789.5H708M708.5 788V790M709 788.5H720M720.5 787V789M721 787.5H731M731.5 786V788M732 786.5H743M743.5 785V787M744 785.5H755M755.5 784V786M756 784.5H774M774.5 783V785M775 783.5H793M793.5 782V784M794 782.5H812M812.5 781V783M813 781.5H831M831.5 780V782M832 780.5H850M850.5 779V781M851 779.5H877M877.5 778V780M878 778.5H905M905.5 777V779M906 777.5H932M932.5 776V778M933 776.5H960M960.5 775V777M961 775.5H987M987.5 774V776M988 774.5H1015M1015.5 773V775M1016 773.5H1048M1048.5 772V774M1049 772.5H1093M1093.5 771V773M1094 771.5H1330M1330.5 771V773M1331 772.5H1397M1397.5 772V774M1398 773.5H1470M1470.5 773V775M1471 774.5H1512M1512.5 774V776M1513 775.5H1555M1555.5 775V777M1556 776.5H1591M1591.5 776V778M1592 777.5H1613M1613.5 777V779M1614 778.5H1635M1635.5 778V780M1636 779.5H1658M1658.5 779V781M1659 780.5H1680M1680.5 780V782M1681 781.5H1702M1702.5 781V783M1703 782.5H1724M1724.5 782V784M1725 783.5H1746M1746.5 783V785M1747 784.5H1751" fill="none" stroke="#ec8a1e" stroke-width="1.2" shape-rendering="crispEdges" /><path d="M3.5 978V980M4 978.5H130M130.5 977V979M131 977.5H207M207.5 976V978M208 976.5H213M213.5 975V977M214 975.5H218M218.5 974V976M219 974.5H223M223.5 973V975M224 973.5H227M227.5 972V974M228 972.5H232M232.5 971V973M233 971.5H236M236.5 970V972M237 970.5H241M241.5 969V971M242 969.5H246M246.5 968V970M247 968.5H250M250.5 967V969M251 967.5H255M255.5 966V968M256 966.5H260M260.5 965V967M261 965.5H266M266.5 964V966M267 964.5H273M273.5 963V965M274 963.5H280M280.5 962V964M281 962.5H286M286.5 961V963M287 961.5H293M293.5 960V962M294 960.5H300M300.5 959V961M301 959.5H307M307.5 958V960M308 958.5H314M314.5 957V959M315 957.5H321M321.5 956V958M322 956.5H328M328.5 955V957M329 955.5H335M335.5 954V956M336 954.5H342M342.5 953V955M343 953.5H350M350.5 952V954M351 952.5H358M358.5 951V953M359 951.5H366M366.5 950V952M367 950.5H374M374.5 949V951M375 949.5H382M382.5 948V950M383 948.5H390M390.5 947V949M391 947.5H398M398.5 946V948M399 946.5H407M407.5 945V947M408 945.5H418M418.5 944V946M419 944.5H429M429.5 943V945M430 943.5H439M439.5 942V944M440 942.5H450M450.5 941V943M451 941.5H461M461.5 940V942M462 940.5H472M472.5 939V941M473 939.5H483M483.5 938V940M484 938.5H494M494.5 937V939M495 937.5H506M506.5 936V938M507 936.5H520M520.5 935V937M521 935.5H533M533.5 934V936M534 934.5H546M546.5 933V935M547 933.5H560M560.5 932V934M561 932.5H573M573.5 931V933M574 931.5H585M585.5 930V932M586 930.5H596M596.5 929V931M597 929.5H606M606.5 928V930M607 928.5H617M617.5 927V929M618 927.5H628M628.5 926V928M629 926.5H639M639.5 925V927M640 925.5H650M650.5 924V926M651 924.5H660M660.5 923V925M661 923.5H671M671.5 922V924M672 922.5H681M681.5 921V923M682 921.5H692M692.5 920V922M693 920.5H702M702.5 919V921M703 919.5H713M713.5 918V920M714 918.5H723M723.5 917V919M724 917.5H734M734.5 916V918M735 916.5H744M744.5 915V917M745 915.5H755M755.5 914V916M756 914.5H770M770.5 913V915M771 913.5H786M786.5 912V914M787 912.5H802M802.5 911V913M803 911.5H818M818.5 910V912M819 910.5H834M834.5 909V911M835 909.5H850M850.5 908V910M851 908.5H876M876.5 907V909M877 907.5H902M902.5 906V908M903 906.5H1026M1026.5 906V908M1027 907.5H1034M1034.5 907V909M1035 908.5H1039M1039.5 908V919M1040.5 918V941M1041.5 940V955M1042.5 954V958M1043.5 957V959M1044.5 958V960M1045.5 959V961M1046.5 960V963M1047.5 962V964M1048.5 963V965M1049.5 964V966M1050 965.5H1052M1052.5 965V967M1053 966.5H1054M1054.5 966V968M1055 967.5H1057M1057.5 967V969M1058 968.5H1060M1060.5 968V970M1061 969.5H1063M1063.5 969V971M1064 970.5H1066M1066.5 970V972M1067 971.5H1071M1071.5 971V973M1072 972.5H1350M1350.5 971V973M1351 971.5H1464M1464.5 970V972M1465 970.5H1579M1579.5 969V971M1580 969.5H1693M1693.5 968V970M1694 968.5H1751" fill="none" stroke="#6c2496" stroke-width="1.2" shape-rendering="crispEdges" /><path d="M3 161.5H1718" stroke="#3c3c3c" stroke-width="1.1" stroke-dasharray="5 5" fill="none"/><path d="M3 246.5H1718" stroke="#3c3c3c" stroke-width="1.1" stroke-dasharray="5 5" fill="none"/><path d="M3 349.5H1718" stroke="#3c3c3c" stroke-width="1.1" stroke-dasharray="5 5" fill="none"/><path d="M3 478.5H1718" stroke="#3c3c3c" stroke-width="1.1" stroke-dasharray="5 5" fill="none"/><path d="M3 583.5H1718" stroke="#3c3c3c" stroke-width="1.1" stroke-dasharray="5 5" fill="none"/><path d="M3 863.5H1718" stroke="#3c3c3c" stroke-width="1.1" stroke-dasharray="5 5" fill="none"/><path d="M3 979.5H1718" stroke="#3c3c3c" stroke-width="1.1" stroke-dasharray="5 5" fill="none"/><path d="M1730 701L1742 691V699H1751V703H1742V711Z" fill="#2828c8"/><path d="M1709.5 64H1743Q1746 64 1745.8 67L1744.5 96Q1744 100 1741 97Z" fill="#4a4a4a"/><circle cx="1736.5" cy="72" r="4" fill="none" stroke="#8c8c8c" stroke-width="1.8"/><path d="M1733.5 75L1728.5 80" stroke="#8c8c8c" stroke-width="3" stroke-linecap="round"/><path d="M45 58H65L55 68Z" fill="#f28c22"/><path d="M46 644H64V663H58.5L55 669.5L51.5 663H46Z" fill="#000" stroke="#f28c22" stroke-width="2"/><text x="55" y="660" text-anchor="middle" font-family="Liberation Sans" font-weight="700" font-size="15" fill="#f28c22">T</text>
<svg class="a" style="left:0;top:0" width="1760" height="1000" viewBox="0 0 1760 1000"><path d="M10 102.5H78L84 115.5L78 128.5H10Q6 128.5 6 124.5V106.5Q6 102.5 10 102.5Z" fill="#e6e6e6" stroke="#1e1e1e" stroke-width="2"/><path d="M10 102.5H33V128.5H10Q6 128.5 6 124.5V106.5Q6 102.5 10 102.5Z" fill="#e6e6e6" stroke="#1e1e1e" stroke-width="2"/><text x="19.5" y="120.0" text-anchor="middle" font-family="Liberation Sans" font-size="12.5" fill="#222" letter-spacing="0.5">C 1</text><text x="57.5" y="120.0" text-anchor="middle" font-family="Liberation Sans" font-size="12.5" fill="#222">20 V</text><path d="M10 220H78L84 232.75L78 245.5H10Q6 245.5 6 241.5V224Q6 220 10 220Z" fill="#e8f8fa" stroke="#2cc4d2" stroke-width="2"/><path d="M10 220H33V245.5H10Q6 245.5 6 241.5V224Q6 220 10 220Z" fill="#e8f8fa" stroke="#2cc4d2" stroke-width="2"/><text x="19.5" y="237.25" text-anchor="middle" font-family="Liberation Sans" font-size="12.5" fill="#222" letter-spacing="0.5">C 2</text><text x="57.5" y="237.25" text-anchor="middle" font-family="Liberation Sans" font-size="12.5" fill="#222">300 mV</text><path d="M10 337H31L42 349.75L31 362.5H10Q6 362.5 6 358.5V341Q6 337 10 337Z" fill="#fdeef2" stroke="#f28aa6" stroke-width="2"/><text x="22" y="354.25" text-anchor="middle" font-family="Liberation Sans" font-size="12.5" fill="#e46a88" letter-spacing="0.3">C 3</text><path d="M10 454H78L84 466.5L78 479H10Q6 479 6 475V458Q6 454 10 454Z" fill="#f2f8ea" stroke="#88c844" stroke-width="2"/><path d="M10 454H33V479H10Q6 479 6 475V458Q6 454 10 454Z" fill="#f2f8ea" stroke="#88c844" stroke-width="2"/><text x="19.5" y="471.0" text-anchor="middle" font-family="Liberation Sans" font-size="12.5" fill="#222" letter-spacing="0.5">C 4</text><text x="57.5" y="471.0" text-anchor="middle" font-family="Liberation Sans" font-size="12.5" fill="#222">200 mV</text><path d="M10 571H31L42 583.5L31 596H10Q6 596 6 592V575Q6 571 10 571Z" fill="#fdf3ea" stroke="#f2a448" stroke-width="2"/><text x="22" y="588.0" text-anchor="middle" font-family="Liberation Sans" font-size="12.5" fill="#181818" letter-spacing="0.3">C 5</text><path d="M10 688H78L84 700.75L78 713.5H10Q6 713.5 6 709.5V692Q6 688 10 688Z" fill="#e8e8f6" stroke="#141414" stroke-width="2"/><path d="M10 688H33V713.5H10Q6 713.5 6 709.5V692Q6 688 10 688Z" fill="#2a2ac8" stroke="#141414" stroke-width="2"/><text x="19.5" y="705.25" text-anchor="middle" font-family="Liberation Sans" font-size="12.5" fill="#ffffff" letter-spacing="0.5">C 6</text><text x="57.5" y="705.25" text-anchor="middle" font-family="Liberation Sans" font-size="12.5" fill="#3030c0">3 V</text><path d="M10 851H31L42 863.0L31 875H10Q6 875 6 871V855Q6 851 10 851Z" fill="#fdf3ea" stroke="#f2a448" stroke-width="2"/><text x="22" y="867.5" text-anchor="middle" font-family="Liberation Sans" font-size="12.5" fill="#181818" letter-spacing="0.3">M 1</text><path d="M10 966.5H31L42 979.0L31 991.5H10Q6 991.5 6 987.5V970.5Q6 966.5 10 966.5Z" fill="#f3eaf8" stroke="#b888d4" stroke-width="2"/><text x="22" y="983.5" text-anchor="middle" font-family="Liberation Sans" font-size="12.5" fill="#7040a0" letter-spacing="0.3">M 2</text><text x="101.8" y="122.39999999999999" font-family="Liberation Sans" font-size="20.5" fill="#000" fill-opacity="0.85" textLength="98.5" lengthAdjust="spacingAndGlyphs">U_loop,coil</text><text x="101" y="121.6" font-family="Liberation Sans" font-size="20.5" fill="#141414" stroke="#141414" stroke-width="0.15" textLength="98.5" lengthAdjust="spacingAndGlyphs">U_loop,coil</text><text x="101.8" y="239.70000000000002" font-family="Liberation Sans" font-size="20.5" fill="#000" fill-opacity="0.85" textLength="78.5" lengthAdjust="spacingAndGlyphs">U_Bt,coil</text><text x="101" y="238.9" font-family="Liberation Sans" font-size="20.5" fill="#1cb4c4" stroke="#1cb4c4" stroke-width="0.15" textLength="78.5" lengthAdjust="spacingAndGlyphs">U_Bt,coil</text><text x="53.8" y="356.0" font-family="Liberation Sans" font-size="20.5" fill="#000" fill-opacity="0.85" textLength="93" lengthAdjust="spacingAndGlyphs">U_Rog,coil</text><text x="53" y="355.2" font-family="Liberation Sans" font-size="20.5" fill="#d4284e" stroke="#d4284e" stroke-width="0.15" textLength="93" lengthAdjust="spacingAndGlyphs">U_Rog,coil</text><text x="101.8" y="473.2" font-family="Liberation Sans" font-size="20.5" fill="#000" fill-opacity="0.85" textLength="86.6" lengthAdjust="spacingAndGlyphs">U_Photod</text><text x="101" y="472.4" font-family="Liberation Sans" font-size="20.5" fill="#78bc2c" stroke="#78bc2c" stroke-width="0.15" textLength="86.6" lengthAdjust="spacingAndGlyphs">U_Photod</text><text x="53.8" y="590.5" font-family="Liberation Sans" font-size="20.5" fill="#000" fill-opacity="0.85" textLength="103.5" lengthAdjust="spacingAndGlyphs">U_Diamagn</text><text x="53" y="589.7" font-family="Liberation Sans" font-size="20.5" fill="#e48c28" stroke="#e48c28" stroke-width="0.15" textLength="103.5" lengthAdjust="spacingAndGlyphs">U_Diamagn</text><text x="101.8" y="707.4" font-family="Liberation Sans" font-size="20.5" fill="#000" fill-opacity="0.85" textLength="65" lengthAdjust="spacingAndGlyphs">Trigger</text><text x="101" y="706.6" font-family="Liberation Sans" font-size="20.5" fill="#2222a8" stroke="#2222a8" stroke-width="0.15" textLength="65" lengthAdjust="spacingAndGlyphs">Trigger</text><text x="53.8" y="865.8" font-family="Liberation Sans" font-size="20.5" fill="#000" fill-opacity="0.85" textLength="28" lengthAdjust="spacingAndGlyphs">B_t</text><text x="53" y="865" font-family="Liberation Sans" font-size="20.5" fill="#e08820" stroke="#e08820" stroke-width="0.15" textLength="28" lengthAdjust="spacingAndGlyphs">B_t</text><text x="53.8" y="986.3" font-family="Liberation Sans" font-size="20.5" fill="#000" fill-opacity="0.85" textLength="27" lengthAdjust="spacingAndGlyphs">I_p</text><text x="53" y="985.5" font-family="Liberation Sans" font-size="20.5" fill="#602090" stroke="#602090" stroke-width="0.15" textLength="27" lengthAdjust="spacingAndGlyphs">I_p</text></svg>
<div class="a" style="left:1769px;top:29px;width:160px;height:967px;border:1px solid #5c5650;border-right:none"></div>
<svg class="a" style="left:1770px;top:0" width="150" height="30" viewBox="1770 0 150 30"><text x="1786" y="25.7" font-family="Liberation Sans" font-weight="700" font-size="31" fill="#fff" stroke="#fff" stroke-width="0.9" transform="translate(1786 0) scale(0.8 1) translate(-1786 0)">Te</text><rect x="1812.5" y="4" width="5" height="21.7" fill="#fff"/><path d="M1818 25.7L1824 15.5L1830.5 25.7Z" fill="#fff"/><path d="M1815 25.7H1821L1830.5 9.5H1824.5Z" fill="#1ec0e0"/><text x="1831" y="25.7" font-family="Liberation Sans" font-weight="700" font-size="31" fill="#fff" stroke="#fff" stroke-width="0.9" transform="translate(1831 0) scale(0.84 1) translate(-1831 0)">tronix</text></svg>
<div class="a" style="left:1802px;top:29px;color:#e8e8e8;font-size:16px;font-weight:700;line-height:20px;letter-spacing:0.6px">Add New...</div>
<div class="btn" style="left:1778px;top:54px">Cursors</div>
<div class="btn" style="left:1850px;top:54px">Callout</div>
<div class="btn" style="left:1778px;top:100px">Measure</div>
<div class="btn" style="left:1850px;top:100px">Search</div>
<div class="btn" style="left:1778px;top:146px">Results<br>Table</div>
<div class="btn" style="left:1850px;top:146px">Plot</div>
<div class="btn" style="left:1850px;top:196px">More...</div>
<div class="btn" style="left:1778px;top:196px;display:block"><svg style="position:absolute;left:-1px;top:-1px" width="63" height="37" viewBox="0 0 63 37"><rect x="20.3" y="7.1" width="21.4" height="19.6" fill="none" stroke="#c8c8c8" stroke-width="2.2" stroke-dasharray="2.6 3.6"/><circle cx="33" cy="15" r="4.4" fill="none" stroke="#c8c8c8" stroke-width="2"/><path d="M29.5 18.5L25.5 22" stroke="#c8c8c8" stroke-width="3" stroke-linecap="round"/><path d="M37 21L37.5 30.5L39.8 28.2L42.2 32.6L44.2 31.6L41.8 27.2L45.2 26.6Z" fill="#c8c8c8"/></svg></div>
<div class="a" style="left:1773px;top:189px;width:144px;height:1px;background:#5c5650"></div>
<div class="a" style="left:1773px;top:241px;width:144px;height:1px;background:#5c5650"></div>
<div class="a" style="left:1760px;top:502px;width:4px;height:4px;border-radius:2px;background:#b8b8b8"></div>
<div class="a" style="left:1760px;top:510px;width:4px;height:4px;border-radius:2px;background:#b8b8b8"></div>
<div class="a" style="left:1760px;top:519px;width:4px;height:4px;border-radius:2px;background:#b8b8b8"></div>
<div class="bh a" style="left:3px;top:984px;background:#1c1c1c;color:#ece040">Ch 1</div>
<div class="bl a" style="left:3px;top:1003px"></div>
<div class="br a" style="left:3px;top:1005px">Clipping</div>
<svg class="a" style="left:3px;top:1005px" width="16" height="16" viewBox="0 0 16 16"><path d="M8 1.2L15.4 15.4H0.6Z" fill="#f4ec00" stroke="#3a3a50" stroke-width="1.1"/><path d="M8 6V12.5" stroke="#8a8a30" stroke-width="1.8"/></svg>
<div class="bb a" style="left:3px;top:1022px;height:56px">
<div style="top:0px;">5 V/div</div>
<div style="top:19px;">1 MΩ</div>
<div style="top:38px;">200 kHz</div>
</div>
<div class="a" style="left:75px;top:1061px;font-size:10px;line-height:10px;color:#111">B</div><div class="a" style="left:81px;top:1065px;font-size:10px;line-height:10px;color:#111">w</div>
<div class="bh a" style="left:98px;top:984px;background:#1e4242;color:#30d2e2">Ch 2</div>
<div class="bl a" style="left:98px;top:1003px"></div>
<div class="br a" style="left:98px;top:1005px">Clipping</div>
<svg class="a" style="left:98px;top:1005px" width="16" height="16" viewBox="0 0 16 16"><path d="M8 1.2L15.4 15.4H0.6Z" fill="#f4ec00" stroke="#3a3a50" stroke-width="1.1"/><path d="M8 6V12.5" stroke="#8a8a30" stroke-width="1.8"/></svg>
<div class="bb a" style="left:98px;top:1022px;height:56px">
<div style="top:0px;">250 mV/div</div>
<div style="top:19px;">1 MΩ</div>
<div style="top:38px;">200 kHz</div>
</div>
<div class="a" style="left:170px;top:1061px;font-size:10px;line-height:10px;color:#111">B</div><div class="a" style="left:176px;top:1065px;font-size:10px;line-height:10px;color:#111">w</div>
<div class="bh a" style="left:193px;top:984px;background:#45242a;color:#f2f2f2">Ch 3</div>
<div class="bl a" style="left:193px;top:1003px"></div>
<div class="br a" style="left:193px;top:1005px">Clipping</div>
<svg class="a" style="left:193px;top:1005px" width="16" height="16" viewBox="0 0 16 16"><path d="M8 1.2L15.4 15.4H0.6Z" fill="#f4ec00" stroke="#3a3a50" stroke-width="1.1"/><path d="M8 6V12.5" stroke="#8a8a30" stroke-width="1.8"/></svg>
<div class="bb a" style="left:193px;top:1022px;height:56px">
<div style="top:0px;">450 mV/div</div>
<div style="top:19px;">1 MΩ</div>
<div style="top:38px;">200 kHz</div>
</div>
<div class="a" style="left:265px;top:1061px;font-size:10px;line-height:10px;color:#111">B</div><div class="a" style="left:271px;top:1065px;font-size:10px;line-height:10px;color:#111">w</div>
<div class="bh a" style="left:288px;top:1003px;background:#343e22;color:#9ad034">Ch 4</div>
<div class="bl a" style="left:288px;top:1022px"></div>
<div class="bb a" style="left:288px;top:1021px;height:57px">
<div style="top:1px;">200 mV/div</div>
<div style="top:20px;">1 MΩ</div>
<div style="top:39px;">200 kHz</div>
</div>
<div class="a" style="left:360px;top:1061px;font-size:10px;line-height:10px;color:#111">B</div><div class="a" style="left:366px;top:1065px;font-size:10px;line-height:10px;color:#111">w</div>
<div class="bh a" style="left:383px;top:1003px;background:#4b3420;color:#f4a234">Ch 5</div>
<div class="bl a" style="left:383px;top:1022px"></div>
<div class="bb a" style="left:383px;top:1021px;height:57px">
<div style="top:1px;">1 V/div</div>
<div style="top:20px;">1 MΩ</div>
<div style="top:39px;">200 kHz</div>
</div>
<div class="a" style="left:455px;top:1061px;font-size:10px;line-height:10px;color:#111">B</div><div class="a" style="left:461px;top:1065px;font-size:10px;line-height:10px;color:#111">w</div>
<div class="bh a" style="left:478px;top:984px;background:#2a2ac4;color:#ffffff">Ch 6</div>
<div class="bl a" style="left:478px;top:1003px"></div>
<div class="br a" style="left:478px;top:1005px">Clipping</div>
<svg class="a" style="left:478px;top:1005px" width="16" height="16" viewBox="0 0 16 16"><path d="M8 1.2L15.4 15.4H0.6Z" fill="#f4ec00" stroke="#3a3a50" stroke-width="1.1"/><path d="M8 6V12.5" stroke="#8a8a30" stroke-width="1.8"/></svg>
<div class="bb a" style="left:478px;top:1022px;height:56px">
<div style="top:0px;">750 mV/div</div>
<div style="top:19px;">1 MΩ</div>
<div style="top:38px;">200 kHz</div>
</div>
<div class="a" style="left:550px;top:1061px;font-size:10px;line-height:10px;color:#111">B</div><div class="a" style="left:556px;top:1065px;font-size:10px;line-height:10px;color:#111">w</div>
<div class="bh a" style="left:573px;top:984px;background:#4a3420;color:#f49a30">Math 1</div>
<div class="bl a" style="left:573px;top:1003px"></div>
<div class="br a" style="left:573px;top:1005px">Empty i…</div>
<svg class="a" style="left:573px;top:1005px" width="16" height="16" viewBox="0 0 16 16"><path d="M8 1.2L15.4 15.4H0.6Z" fill="#f4ec00" stroke="#3a3a50" stroke-width="1.1"/><path d="M8 6V12.5" stroke="#8a8a30" stroke-width="1.8"/></svg>
<div class="bb a" style="left:573px;top:1022px;height:56px">
<div style="top:0px;font-weight:700;">73.8 mT/div</div>
<div style="top:19px;">Intg(Ch2)…</div>
</div>
<div class="bh a" style="left:668px;top:984px;background:#2c2030;color:#ffffff">Math 2</div>
<div class="bl a" style="left:668px;top:1003px"></div>
<div class="br a" style="left:668px;top:1005px">Empty i…</div>
<svg class="a" style="left:668px;top:1005px" width="16" height="16" viewBox="0 0 16 16"><path d="M8 1.2L15.4 15.4H0.6Z" fill="#f4ec00" stroke="#3a3a50" stroke-width="1.1"/><path d="M8 6V12.5" stroke="#8a8a30" stroke-width="1.8"/></svg>
<div class="bb a" style="left:668px;top:1022px;height:56px">
<div style="top:0px;font-weight:700;">822.81 A/…</div>
<div style="top:19px;">-Intg(Ch3…</div>
</div>
<div class="a" style="left:1118px;top:1000px;width:1px;height:77px;background:#5c5650"></div>
<div class="a" style="left:1269px;top:1000px;width:1px;height:77px;background:#5c5650"></div>
<div class="a" style="left:1811px;top:1000px;width:1px;height:77px;background:#5c5650"></div>
<div class="a" style="left:1129px;top:999px;width:40px;height:80px;border:1px solid #5e5852;border-radius:7px;background:linear-gradient(#3c3d40 0%,#2b2b2c 30%,#262626 85%,#1e1e1e 100%)"></div>
<div class="a" style="left:1133px;top:1007px;width:32px;height:2px;background:#b42020"></div>
<div class="a" style="left:1129px;top:1019px;width:40px;text-align:center;color:#f0f0f0;font-size:15px;line-height:16px">Add<br>New<br>Math</div>
<div class="a" style="left:1174px;top:999px;width:40px;height:80px;border:1px solid #5e5852;border-radius:7px;background:linear-gradient(#3c3d40 0%,#2b2b2c 30%,#262626 85%,#1e1e1e 100%)"></div>
<div class="a" style="left:1178px;top:1007px;width:32px;height:2px;background:#c4cad8"></div>
<div class="a" style="left:1174px;top:1019px;width:40px;text-align:center;color:#f0f0f0;font-size:15px;line-height:16px">Add<br>New<br>Ref</div>
<div class="a" style="left:1219px;top:999px;width:40px;height:80px;border:1px solid #5e5852;border-radius:7px;background:linear-gradient(#3c3d40 0%,#2b2b2c 30%,#262626 85%,#1e1e1e 100%)"></div>
<div class="a" style="left:1223px;top:1007px;width:32px;height:2px;background:#c850f0"></div>
<div class="a" style="left:1219px;top:1019px;width:40px;text-align:center;color:#f0f0f0;font-size:15px;line-height:16px">Add<br>New<br>Bus</div>
<div class="pan" style="left:1281px;top:1003px;width:199px;height:75px"><div class="ph">Horizontal</div><div class="pl"></div><div class="t" style="left:4px;top:18px">4.5 ms/div</div><div class="t" style="left:109px;top:18px">45 ms</div><div class="t" style="left:4px;top:37px">SR: 1 MS/s</div><div class="t" style="left:110px;top:37px">1 µs/pt</div><div class="t" style="left:4px;top:56px">RL: 45 kpts</div><div class="t" style="left:124px;top:56px">3%</div><svg style="position:absolute;left:109px;top:59px" width="11" height="14" viewBox="0 0 11 14"><path d="M1 1H10V10H7L5.5 13L4 10H1Z" fill="#000" stroke="#f28c22" stroke-width="1.5"/><path d="M3 3H8M5.5 3V8.5" stroke="#fff" stroke-width="1.5"/></svg></div>
<div class="pan" style="left:1486px;top:1003px;width:159px;height:75px"><div class="ph">Trigger</div><div class="pl"></div><div style="position:absolute;left:4px;top:22px;width:29px;height:15px;border:1px solid #111;border-radius:6px;background:#2424c8;color:#fff;font-size:15px;line-height:14px;text-align:center">6</div><svg style="position:absolute;left:43px;top:21px" width="18" height="13" viewBox="0 0 18 13"><path d="M1 11H5L13 1.5H17" fill="none" stroke="#3a3a8a" stroke-width="1.3"/></svg><div class="t" style="left:69px;top:18px">3 V</div></div>
<div class="pan" style="left:1650px;top:1003px;width:150px;height:75px"><div class="ph">Acquisition</div><div class="pl"></div><div class="t" style="left:4px;top:18px">Manual,</div><div class="t" style="left:85px;top:18px">Analyze</div><div class="t" style="left:4px;top:37px">High Res: 16 bits</div><div class="t" style="left:4px;top:56px">Single: 1 /1</div></div>
<div class="a" style="left:1822px;top:999px;width:90px;height:36px;background:#ff1d25;border:1px solid #8a8a8a;border-radius:6px;color:#fff;font-weight:700;font-size:14px;line-height:34px;text-align:center">Stopped</div>
<div class="a" style="left:1822px;top:1041px;width:90px;height:38px;background:#c9c9c9;border:1px solid #8a8a8a;border-radius:6px;color:#111;font-size:15px;line-height:17px;text-align:center;padding-top:1px">28 May 2025<br>6:09:42 PM</div>
</body></html>
